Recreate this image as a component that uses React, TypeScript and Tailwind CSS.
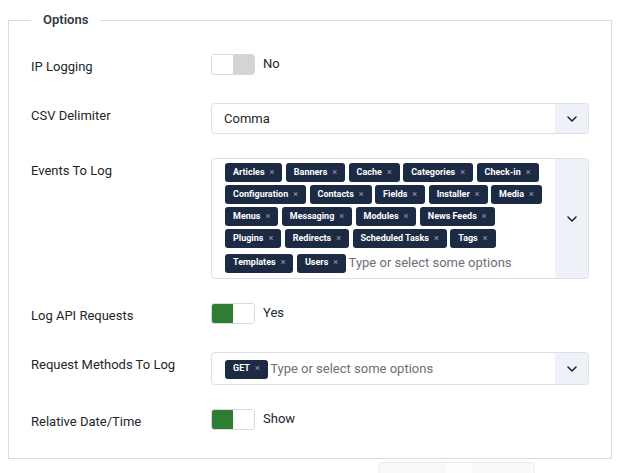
import { ChevronDown } from 'lucide-react';

const events = [
  'Articles', 'Banners', 'Cache', 'Categories', 'Check-in',
  'Configuration', 'Contacts', 'Fields', 'Installer', 'Media',
  'Menus', 'Messaging', 'Modules', 'News Feeds',
  'Plugins', 'Redirects', 'Scheduled Tasks', 'Tags',
  'Templates', 'Users',
];

function Tag({ label }: { label: string }) {
  return (
    <span className="flex h-[19px] items-center rounded-[3px] bg-[#1d2a43] pl-2 pr-2 text-[9px] font-bold text-white">
      {label}
      <span className="ml-[5px] text-[9px] font-normal text-[#9aa3b2]">×</span>
    </span>
  );
}

function Switch({ on, label }: { on: boolean; label: string }) {
  return (
    <div className="flex h-[25px] items-start">
      <div className="flex h-[21px] w-[44px] overflow-hidden rounded-[3px] border border-[#d9d9d9] bg-white">
        <div className={`w-1/2 ${on ? 'bg-[#2e7d32]' : 'bg-white'}`} />
        <div className={`w-1/2 ${on ? 'bg-white' : 'bg-[#d4d4d4]'}`} />
      </div>
      <span className="ml-2 text-[13px] leading-5 text-[#22262a]">{label}</span>
    </div>
  );
}

function Row({ label, children }: { label: string; children: React.ReactNode }) {
  return (
    <div className="flex items-start">
      <div className="mt-[3px] w-[180px] shrink-0 text-[13px] leading-5 text-[#22262a]">{label}</div>
      <div className="flex-1">{children}</div>
    </div>
  );
}

function ChoiceBox({ tags }: { tags: string[] }) {
  return (
    <div className="flex rounded-[4px] border border-[#dcdfe4] bg-white">
      <div className="flex flex-1 flex-wrap items-center gap-x-[3.5px] gap-y-[3px] pb-[3px] pl-[13px] pr-[8px] pt-[4px]">
        {tags.map((t) => (
          <Tag key={t} label={t} />
        ))}
        <span className="-ml-[1px] flex h-[24px] items-center text-[13px] text-[#6b7079]">
          Type or select some options
        </span>
      </div>
      <div className="flex w-[33px] shrink-0 items-center justify-center rounded-r-[4px] bg-[#eef2f8]">
        <ChevronDown className="h-4 w-4 text-[#1b1f24]" strokeWidth={2.2} />
      </div>
    </div>
  );
}

export default function App() {
  return (
    <div className="min-h-[473px] bg-white pt-[10px] font-['Roboto','Liberation_Sans',sans-serif]">
      <fieldset className="ml-2 w-[604px] border border-[#dcdcdc] pb-6 pl-[22px] pr-[22px] pt-6">
        <legend className="px-3 text-[13px] font-semibold leading-5 text-[#333a42]">Options</legend>
        <div className="flex flex-col gap-6">
          <Row label="IP Logging">
            <Switch on={false} label="No" />
          </Row>
          <Row label="CSV Delimiter">
            <div className="flex h-[31px] rounded-[4px] border border-[#dcdfe4] bg-white">
              <div className="flex flex-1 items-center pl-[12px] text-[13px] text-[#22262a]">Comma</div>
              <div className="flex w-[33px] items-center justify-center rounded-r-[4px] bg-[#eef2f8]">
                <ChevronDown className="h-4 w-4 text-[#1b1f24]" strokeWidth={2.2} />
              </div>
            </div>
          </Row>
          <Row label="Events To Log">
            <ChoiceBox tags={events} />
          </Row>
          <Row label="Log API Requests">
            <Switch on label="Yes" />
          </Row>
          <Row label="Request Methods To Log">
            <ChoiceBox tags={['GET']} />
          </Row>
          <Row label="Relative Date/Time">
            <Switch on label="Show" />
          </Row>
        </div>
      </fieldset>
      <div className="ml-[378px] mt-[3px] flex h-[30px] w-[157px] items-end rounded-t-[4px] border border-[#ededed] bg-[#f9f9f9]">
        <span className="ml-[43px] h-[2px] w-[5px] bg-[#b8c48a]" />
        <span className="ml-[19px] h-[28px] w-[25px] bg-[#fdfdfd]" />
        <span className="ml-[41px] h-[2px] w-[9px] bg-[#9c7f6e]" />
      </div>
    </div>
  );
}
